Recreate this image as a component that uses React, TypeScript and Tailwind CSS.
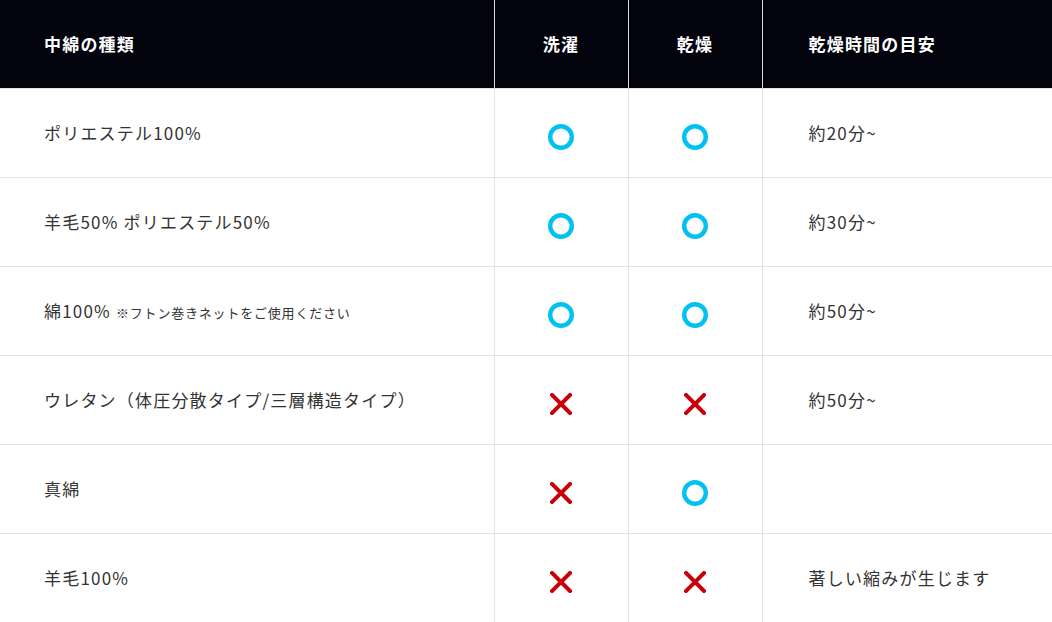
import React from 'react'

type Mark = 'o' | 'x'

const rows: { name: React.ReactNode; wash: Mark; dry: Mark; time: string }[] = [
  { name: 'ポリエステル100%', wash: 'o', dry: 'o', time: '約20分~' },
  { name: '羊毛50% ポリエステル50%', wash: 'o', dry: 'o', time: '約30分~' },
  {
    name: (
      <>
        綿100% <span className="text-[13px] tracking-[0.8px]">※フトン巻きネットをご使用ください</span>
      </>
    ),
    wash: 'o',
    dry: 'o',
    time: '約50分~',
  },
  { name: 'ウレタン（体圧分散タイプ/三層構造タイプ）', wash: 'x', dry: 'x', time: '約50分~' },
  { name: '真綿', wash: 'x', dry: 'o', time: '' },
  { name: '羊毛100%', wash: 'x', dry: 'x', time: '著しい縮みが生じます' },
]

function Circle() {
  return (
    <svg width="26" height="26" viewBox="0 0 26 26" className="mx-auto block">
      <circle cx="13" cy="13" r="10.8" fill="none" stroke="#00c2f2" strokeWidth="4.4" />
    </svg>
  )
}

function Cross() {
  return (
    <svg width="22" height="22" viewBox="0 0 22 22" className="mx-auto block">
      <path d="M2 2 L20 20 M20 2 L2 20" stroke="#c8000a" strokeWidth="4" strokeLinecap="square" />
    </svg>
  )
}

function MarkCell({ mark }: { mark: Mark }) {
  return (
    <td className="border-r border-[#e3e3e3] pt-[9px] text-center align-middle">
      {mark === 'o' ? <Circle /> : <Cross />}
    </td>
  )
}

export default function App() {
  return (
    <div
      className="w-[1052px] h-[622px] overflow-hidden bg-white text-[17px] tracking-[1.2px] text-[#333]"
      style={{ fontFamily: '"Noto Sans CJK JP", "Noto Sans", sans-serif' }}
    >
      <table className="w-full border-collapse table-fixed">
        <colgroup>
          <col className="w-[494px]" />
          <col className="w-[134px]" />
          <col className="w-[134px]" />
          <col />
        </colgroup>
        <thead>
          <tr className="h-[88px] bg-[#02030d] text-white font-bold">
            <th className="pl-[44px] text-left border-r border-[#d9d9d9]">中綿の種類</th>
            <th className="text-center border-r border-[#d9d9d9]">洗濯</th>
            <th className="text-center border-r border-[#d9d9d9]">乾燥</th>
            <th className="pl-[46px] text-left">乾燥時間の目安</th>
          </tr>
        </thead>
        <tbody>
          {rows.map((r, i) => (
            <tr key={i} className="h-[89px] border-t border-[#e3e3e3]">
              <td className="pl-[44px] border-r border-[#e3e3e3] align-middle">{r.name}</td>
              <MarkCell mark={r.wash} />
              <MarkCell mark={r.dry} />
              <td className="pl-[46px] align-middle">{r.time}</td>
            </tr>
          ))}
        </tbody>
      </table>
    </div>
  )
}
